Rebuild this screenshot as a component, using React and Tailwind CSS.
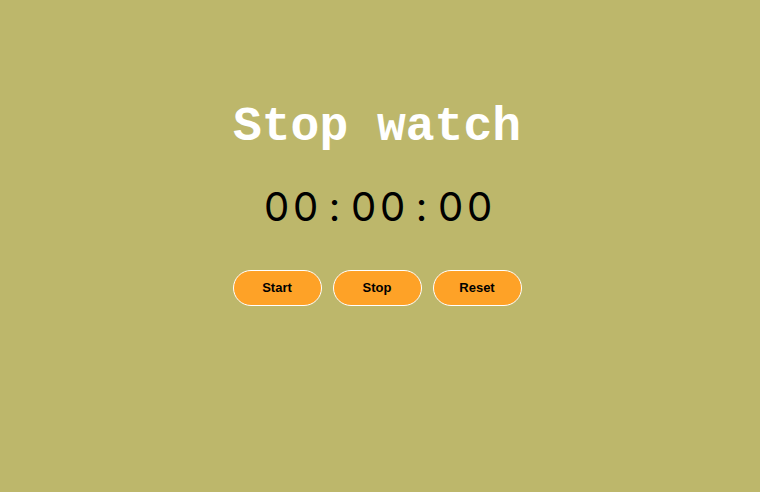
const TIME = "00:00:00";

export default function App() {
  return (
    <div className="min-h-screen w-full bg-[#bdb76b] flex flex-col items-center pt-[100px] pr-[6px]">
      <h1 className="font-['Liberation_Mono',monospace] font-bold text-[48px] leading-[54px] text-white">
        Stop watch
      </h1>
      <div className="mt-[29px] pl-[2px] flex font-['Inter',sans-serif] text-[40px] leading-[48px] text-black">
        {TIME.split("").map((ch, i) => (
          <span key={i} className="w-[29px] text-center">
            {ch}
          </span>
        ))}
      </div>
      <div className="mt-[39px] flex gap-[11px]">
        {["Start", "Stop", "Reset"].map((label) => (
          <button
            key={label}
            className="w-[89px] h-[36px] rounded-[18px] border border-white bg-[#fea227] font-['Liberation_Sans',sans-serif] font-bold text-[13px] text-black"
          >
            {label}
          </button>
        ))}
      </div>
    </div>
  );
}
